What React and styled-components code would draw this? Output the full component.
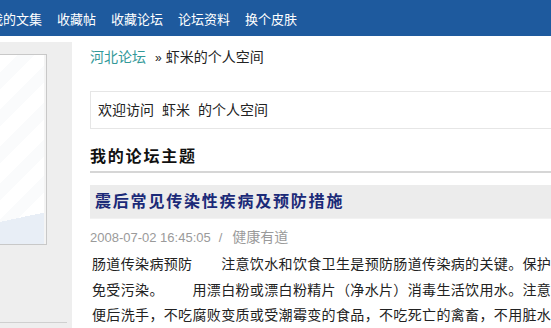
import React from "react";
import styled, { createGlobalStyle } from "styled-components";

const GlobalStyle = createGlobalStyle`
  body {
    margin: 0;
    overflow: hidden;
    background: #fff;
    font-family: "Liberation Sans", "Noto Sans CJK SC", sans-serif;
    color: #222;
  }
`;

const NavBar = styled.div`
  height: 36px;
  background: #1e5a9e;
  display: flex;
  align-items: center;
  gap: 15px;
  overflow: hidden;
`;

const NavItem = styled.a`
  color: #fff;
  font-size: 13px;
  text-decoration: none;
  white-space: nowrap;
  &:first-child {
    margin-left: -10px;
  }
`;

const Main = styled.div`
  display: flex;
  margin-top: 6px;
  height: 286px;
`;

const Sidebar = styled.div`
  width: 72px;
  flex-shrink: 0;
  background: #eeeeee;
  padding-top: 12px;
  box-sizing: border-box;
  display: flex;
  flex-direction: column;
`;

const AvatarBox = styled.div`
  width: 50px;
  height: 191px;
  margin-left: -3px;
  box-sizing: border-box;
  border: 1px solid #c8c8c8;
  background:
    linear-gradient(168deg, transparent 84%, #e8eef6 84%),
    repeating-linear-gradient(135deg, #ffffff 0 14px, #fafbfc 14px 26px);
  box-shadow: inset -2px 0 0 #f4f4f4;
`;

const SideRule = styled.div`
  width: 67px;
  height: 1px;
  background: #cfcfcf;
  margin-top: 77px;
`;

const Content = styled.div`
  margin-left: 18px;
  width: 720px;
  flex-shrink: 0;
`;

const Crumbs = styled.div`
  margin-top: 5px;
  font-size: 14px;
  line-height: 20px;
  color: #222;
`;

const CrumbLink = styled.a`
  color: #339999;
  text-decoration: none;
`;

const Sep = styled.span`
  margin: 0 4px 0 9px;
  font-size: 12px;
`;

const Welcome = styled.div`
  margin-top: 23px;
  height: 38px;
  box-sizing: border-box;
  border: 1px solid #e6e6e6;
  padding-left: 7px;
  font-size: 14px;
  line-height: 36px;
  color: #222;
`;

const Name = styled.span`
  margin: 0 8px;
`;

const Heading = styled.h2`
  margin: 16px 0 0;
  font-size: 16px;
  letter-spacing: 1.8px;
  font-weight: bold;
  line-height: 24px;
  padding-bottom: 2px;
  border-bottom: 2px solid #d6d6d6;
  color: #111;
`;

const PostTitle = styled.div`
  margin-top: 12px;
  height: 34px;
  box-sizing: border-box;
  background: #ececec;
  border-bottom: 1px solid #f2f2f2;
  padding-left: 5px;
  font-size: 16px;
  letter-spacing: 1.8px;
  font-weight: bold;
  line-height: 33px;
  color: #1b2a78;
`;

const Meta = styled.div`
  margin-top: 8px;
  font-size: 13px;
  line-height: 20px;
  color: #9a9a9a;
`;

const Slash = styled.span`
  margin: 0 10px 0 8px;
`;

const Category = styled.span`
  font-size: 14px;
`;

const Body = styled.p`
  margin: 4px 0 0 2px;
  width: 492px;
  font-size: 14px;
  letter-spacing: 0.35px;
  line-height: 25.5px;
  color: #222;
  text-spacing-trim: space-all;
  font-feature-settings: "chws" 0, "halt" 0, "palt" 0;
`;

const navItems = ["我的文集", "收藏帖", "收藏论坛", "论坛资料", "换个皮肤"];

export default function App() {
  return (
    <>
      <GlobalStyle />
      <NavBar>
        {navItems.map((n) => (
          <NavItem key={n}>{n}</NavItem>
        ))}
      </NavBar>
      <Main>
        <Sidebar>
          <AvatarBox />
          <SideRule />
        </Sidebar>
        <Content>
          <Crumbs>
            <CrumbLink>河北论坛</CrumbLink>
            <Sep>»</Sep>
            虾米的个人空间
          </Crumbs>
          <Welcome>
            欢迎访问<Name>虾米</Name>的个人空间
          </Welcome>
          <Heading>我的论坛主题</Heading>
          <PostTitle>震后常见传染性疾病及预防措施</PostTitle>
          <Meta>
            2008-07-02 16:45:05<Slash>/</Slash>
            <Category>健康有道</Category>
          </Meta>
          <Body>
            肠道传染病预防　　注意饮水和饮食卫生是预防肠道传染病的关键。保护水源免受污染。　　用漂白粉或漂白粉精片（净水片）消毒生活饮用水。注意饭前便后洗手，不吃腐败变质或受潮霉变的食品，不吃死亡的禽畜，不用脏水漱口。
          </Body>
        </Content>
      </Main>
    </>
  );
}
